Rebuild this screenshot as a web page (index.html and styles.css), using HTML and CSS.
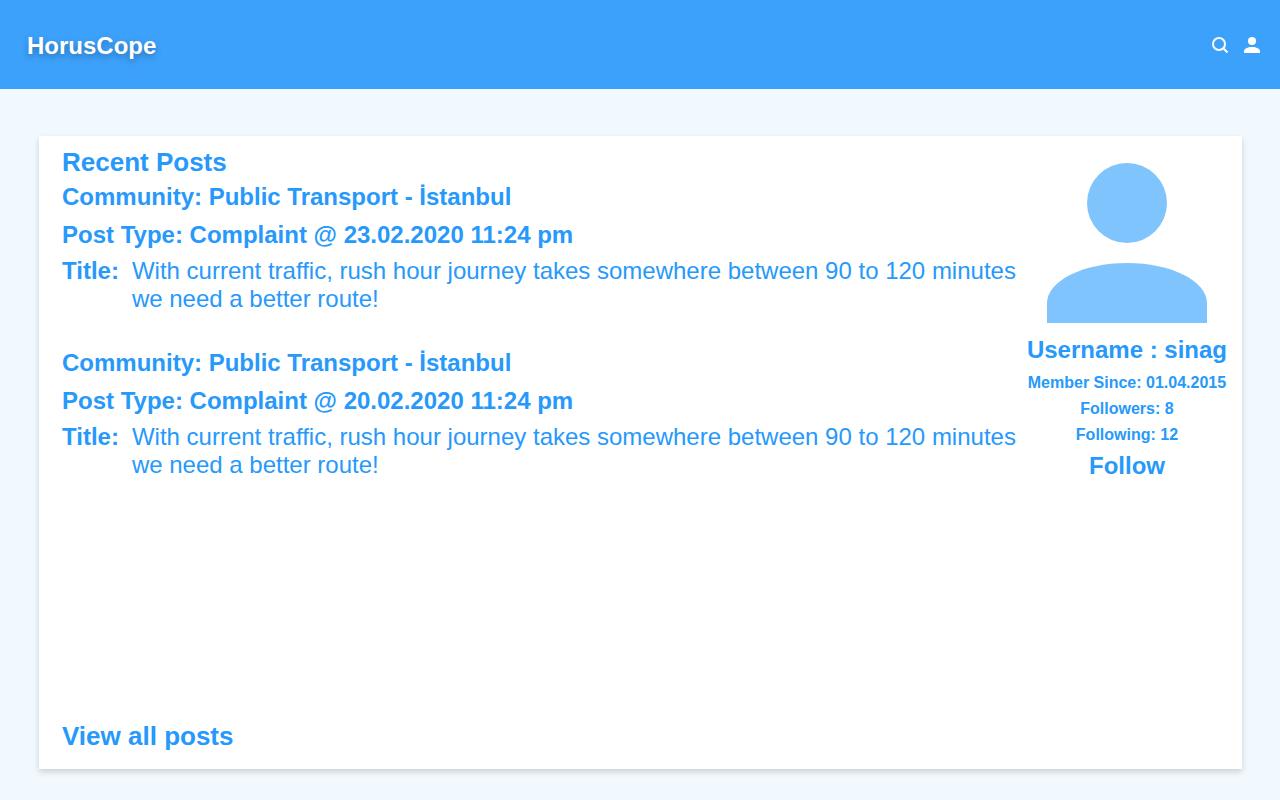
FILE: index.html
```html
<!DOCTYPE html>
<html lang="en">
<head>
<meta charset="utf-8">
<meta name="viewport" content="width=device-width, initial-scale=1">
<title>HorusCope</title>
<link rel="stylesheet" href="styles.css">
</head>
<body>
<header class="topbar">
  <a class="brand" href="#">HorusCope</a>
  <nav class="actions">
    <button class="icon-button" type="button" aria-label="Search">
      <svg width="16" height="16" viewBox="0 0 16 16" fill="none" stroke="currentColor" stroke-width="2"><circle cx="7" cy="7" r="6"/><path d="M11 11 15.5 15.5"/></svg>
    </button>
    <button class="icon-button" type="button" aria-label="Profile">
      <svg width="16" height="16" viewBox="0 0 16 16" fill="currentColor"><circle cx="8" cy="4" r="4"/><path d="M0 16V14C0 11.8 3.6 10 8 10S16 11.8 16 14V16Z"/></svg>
    </button>
  </nav>
</header>
<main class="page">
  <div class="card">
    <section class="posts">
      <h1 class="heading">Recent Posts</h1>
      <article class="post">
        <h2 class="line">Community: Public Transport - İstanbul</h2>
        <p class="line">Post Type: Complaint @ 23.02.2020 11:24 pm</p>
        <div class="title-row">
          <span class="label">Title:</span>
          <p class="title">With current traffic, rush hour journey takes somewhere between 90 to 120 minutes<br>we need a better route!</p>
        </div>
      </article>
      <article class="post">
        <h2 class="line">Community: Public Transport - İstanbul</h2>
        <p class="line">Post Type: Complaint @ 20.02.2020 11:24 pm</p>
        <div class="title-row">
          <span class="label">Title:</span>
          <p class="title">With current traffic, rush hour journey takes somewhere between 90 to 120 minutes<br>we need a better route!</p>
        </div>
      </article>
      <a class="heading view-all" href="#">View all posts</a>
    </section>
    <aside class="profile">
      <svg class="avatar" width="160" height="160" viewBox="0 0 16 16" fill="currentColor" aria-hidden="true"><circle cx="8" cy="4" r="4"/><path d="M0 16V14C0 11.8 3.6 10 8 10S16 11.8 16 14V16Z"/></svg>
      <h2 class="username">Username : sinag</h2>
      <p class="stat">Member Since: 01.04.2015</p>
      <p class="stat">Followers: 8</p>
      <p class="stat">Following: 12</p>
      <button class="follow" type="button">Follow</button>
    </aside>
  </div>
</main>
</body>
</html>
```
FILE: styles.css
```css
* { box-sizing: border-box; }

body {
  display: flex;
  flex-direction: column;
  min-height: 100vh;
  margin: 0;
  background: #f1f9ff;
  color: #2699fb;
  font: 24px/28px "Liberation Sans", Arial, sans-serif;
}

h1, h2, p { margin: 0; }

a { color: inherit; text-decoration: none; }

button {
  padding: 0;
  border: 0;
  background: none;
  color: inherit;
  font: inherit;
  cursor: pointer;
}

.topbar {
  display: flex;
  align-items: center;
  justify-content: space-between;
  padding: 32px 20px 29px 27px;
  background: #3ca1fb;
  color: #fff;
}

.brand {
  font-weight: bold;
  text-shadow: 0 3px 6px rgba(0, 0, 0, 0.29);
}

.actions {
  display: flex;
  gap: 16px;
  padding-bottom: 2px;
}

.icon-button { display: flex; }

.page {
  display: flex;
  flex: 1;
  padding: 47px 38px 31px 39px;
}

.card {
  display: flex;
  flex: 1;
  justify-content: space-between;
  padding: 11px 15px 18px 23px;
  background: #fff;
  box-shadow: 0 3px 6px rgba(0, 0, 0, 0.16);
}

.posts {
  display: flex;
  flex-direction: column;
  align-items: flex-start;
}

.heading {
  font-size: 26px;
  font-weight: bold;
  line-height: 30px;
}

.post { margin: 6px 0 30px; }

.line {
  margin-bottom: 10px;
  font-size: 24px;
  font-weight: bold;
}

.title-row {
  display: flex;
  align-items: baseline;
  gap: 13px;
  margin-top: -2px;
}

.label { font-weight: bold; }

.view-all { margin-top: auto; }

.profile {
  display: flex;
  flex-direction: column;
  align-items: center;
  padding-top: 16px;
}

.avatar { color: #7fc4fd; }

.username {
  margin: 13px 0 6px;
  font-size: 24px;
}

.stat {
  font-size: 16px;
  font-weight: bold;
  line-height: 26px;
}

.follow {
  margin-top: 4px;
  font-weight: bold;
}
```
